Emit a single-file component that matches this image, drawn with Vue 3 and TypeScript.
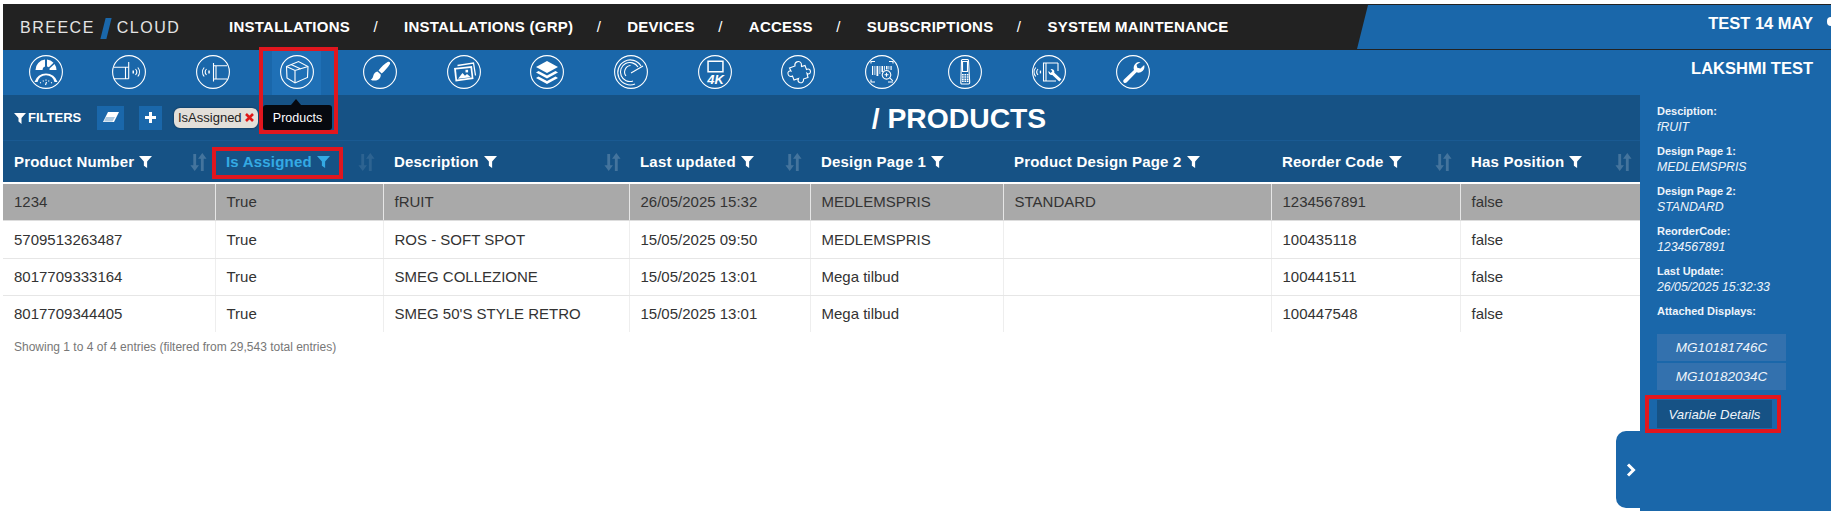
<script setup lang="ts">
interface Shape { d: string; k: 's' | 'f' | 'b' | 'c' | 'o' }

const keypad = [19, 21.2, 23.4, 25.6]
  .flatMap((y) => [14, 16.4, 18.8].map((x) => `M${x} ${y}h1.7v1.5h-1.7z`))
  .join('')

const icons: { name: string; shapes: Shape[]; text?: string }[] = [
  { name: 'dash', shapes: [
    { d: 'M6.500 15A10.500 10.500 0 0 1 16 4.600V11.500A3.500 3.500 0 0 0 13.500 15z', k: 'f' },
    { d: 'M18 4.600A10.500 10.500 0 0 1 24.500 7.700L19.800 12.300A3.500 3.500 0 0 0 18 11.500z', k: 'f' },
    { d: 'M25.500 9A10.500 10.500 0 0 1 27.500 15H20.500A3.500 3.500 0 0 0 20.500 13.500z', k: 'f' },
    { d: 'M5.500 27A12 12 0 0 1 28.500 27H25.500A8.700 8.700 0 0 0 8.500 27z', k: 'f' },
    { d: 'M11 27.500l1 .5M14 25.500l.5 1M17 24.500v1.200M20 25.500l-.5 1M23 27.500l-1 .5M16.500 30l1-3', k: 's' }
  ] },
  { name: 'ant1', shapes: [
    { d: 'M2 12.300H16.600M16.700 7V23.800M2 23.800H16.700M13.500 12.300v11.500', k: 's' },
    { d: 'M20.500 15.600h1.500v2.800h-1.500z', k: 'f' },
    { d: 'M23.500 14a4.500 4.500 0 0 1 0 6M25.800 12.500a7 7 0 0 1 0 9', k: 's' }
  ] },
  { name: 'ant2', shapes: [
    { d: 'M31 10.700H17.500V24H31M20 10.700V24M17.500 8V26.500', k: 's' },
    { d: 'M12.300 15.600h1.500v2.800h-1.500z', k: 'f' },
    { d: 'M10.500 14a4.500 4.500 0 0 0 0 6M8.200 12.500a7 7 0 0 0 0 9', k: 's' }
  ] },
  { name: 'box', shapes: [
    { d: 'M6.500 11.500L18.500 6.500L28 11.500L27.500 22.500L15 28L7 23z', k: 's' },
    { d: 'M6.500 11.500L15 15.500L28 11.500M15 15.500V28M11 9.600L21 14', k: 's' }
  ] },
  { name: 'brush', shapes: [
    { d: 'M25 6.800c1.700-.6 2.700 1 1.800 2.400c-2 3.300-5 6.600-8.100 9.200l-3.200-3c2.700-3.300 6-6.700 9.500-8.600z', k: 'f' },
    { d: 'M14.500 16.400l3.200 3c.3 3.200-1.900 5.400-4.700 6c-2 .4-3.700.2-5.300-.7c1.700-1 2.200-2.200 2.600-4c.5-2.300 2-3.900 4.200-4.300z', k: 'f' }
  ] },
  { name: 'photo', shapes: [
    { d: 'M10.500 10.500L26.500 8L28.500 20.500', k: 'b' },
    { d: 'M7 13L25 11L26.500 24L8.500 26.500z', k: 'f' },
    { d: 'M9 14.500L23.500 13L24.700 22.500L10 24.500z', k: 'c' },
    { d: 'M11 23.800L15.500 18L18 20.800L20 19L23.800 22.300z', k: 'f' },
    { d: 'M18.500 14.800h2.600v2.600h-2.600z', k: 'f' }
  ] },
  { name: 'layers', shapes: [
    { d: 'M17 6L28 12L17 18L6 12z', k: 'f' },
    { d: 'M8.500 16L17 20.500L25.500 16L28 17.500L17 23.500L6 17.500z', k: 'f' },
    { d: 'M8.500 21.500L17 26L25.500 21.500L28 23L17 29L6 23z', k: 'f' }
  ] },
  { name: 'radar', shapes: [
    { d: 'M27 11A12.500 12.500 0 1 0 21 29', k: 's' },
    { d: 'M24 12A9.500 9.500 0 1 0 19 26', k: 's' },
    { d: 'M16.500 10.500A6.500 6.500 0 0 0 12 21', k: 's' },
    { d: 'M17 18L29 11', k: 's' }
  ] },
  { name: '4k', shapes: [
    { d: 'M9.300 5.500H25.700V17.500H9.300zM10.800 7H24.200V16H10.800z', k: 'o' }
  ], text: '4K' },
  { name: 'puzzle', shapes: [
    { d: 'M8.500 13L14 11C13 7 18 5 20 8C21 9.500 20 10.500 20.500 11.500L24 10.500L25.500 14.500C27 13.500 29.500 14 29.500 16.500C29.500 19 27 19.500 26 18.500L27 22.500L22.500 24C23 26.500 21 28.500 18.500 27.500C16.500 26.500 17 24.500 17.500 23.500L13 25L11.500 21C10 22 7.500 21.500 7 19C6.500 16.500 8.500 15.500 10 16z', k: 's' }
  ] },
  { name: 'barcode', shapes: [
    { d: 'M6 8.500V6.500H10M24 6.500H28V8.500M6 24.500V27H10M23 27H28', k: 's' },
    { d: 'M7 11h1.200v9H7zM9.500 11h.8v9h-.8zM11.500 11h1.800v10H11.500zM14.500 11h.8v8h-.8zM16.500 11h1.600v6h-1.600zM19 11h.8v4h-.8zM21 11h1.500v3.500H21zM23.500 11h.8v3.500h-.8zM25.500 11h1.200v4h-1.200z', k: 'f' },
    { d: 'M21.500 15.500a4.300 4.300 0 1 0 .01 0zM24.800 22.800l3 3M19.500 19.800h4M21.500 17.800v4', k: 's' }
  ] },
  { name: 'phone', shapes: [
    { d: 'M13.500 5.500c0-.6.5-1 1-1h5c.6 0 1 .4 1 1l1.200 22c0 .8-.5 1.500-1.200 1.500h-6.500c-.8 0-1.300-.7-1.200-1.500z', k: 's' },
    { d: 'M14.500 6.500h5v10h-5z', k: 's' },
    { d: keypad, k: 'f' }
  ] },
  { name: 'ant3', shapes: [
    { d: 'M26 8H11.500V26H24M14 8V26M26 8v8', k: 's' },
    { d: 'M7.800 15.600h1.300v2.800h-1.300z', k: 'f' },
    { d: 'M6 14a4.500 4.500 0 0 0 0 6M3.800 12.500a7 7 0 0 0 0 9', k: 's' },
    { d: 'M18.500 14a3.200 3.200 0 0 1 3.800 3.800l7 6.500l-2 2.200l-7-6.600a3.200 3.200 0 0 1-3.800-3.900l2.200 2l1.600-1.800z', k: 'f' }
  ] },
  { name: 'wrench', shapes: [
    { d: 'M24.500 7a6 6 0 0 0-6.500 8L8 24.500c-1 1-1 2.200-.2 3c.9.800 2 .8 3-.2l9.700-10a6 6 0 0 0 7.700-7.300l-3.700 3.500l-3.200-.8l-.8-3z', k: 'f' }
  ] }
]

interface Col { title: string; width: number; sort: boolean; active?: boolean }
const cols: Col[] = [
  { title: 'Product Number', width: 212, sort: true },
  { title: 'Is Assigned', width: 168, sort: true, active: true },
  { title: 'Description', width: 246, sort: true },
  { title: 'Last updated', width: 181, sort: true },
  { title: 'Design Page 1', width: 193, sort: false },
  { title: 'Product Design Page 2', width: 268, sort: false },
  { title: 'Reorder Code', width: 189, sort: true },
  { title: 'Has Position', width: 180, sort: true }
]
const rows: string[][] = [
  ['1234', 'True', 'fRUIT', '26/05/2025 15:32', 'MEDLEMSPRIS', 'STANDARD', '1234567891', 'false'],
  ['5709513263487', 'True', 'ROS - SOFT SPOT', '15/05/2025 09:50', 'MEDLEMSPRIS', '', '100435118', 'false'],
  ['8017709333164', 'True', 'SMEG COLLEZIONE', '15/05/2025 13:01', 'Mega tilbud', '', '100441511', 'false'],
  ['8017709344405', 'True', "SMEG 50'S STYLE RETRO", '15/05/2025 13:01', 'Mega tilbud', '', '100447548', 'false']
]
const navItems = ['INSTALLATIONS', 'INSTALLATIONS (GRP)', 'DEVICES', 'ACCESS', 'SUBSCRIPTIONS', 'SYSTEM MAINTENANCE']
const details = [
  { label: 'Desciption:', value: 'fRUIT' },
  { label: 'Design Page 1:', value: 'MEDLEMSPRIS' },
  { label: 'Design Page 2:', value: 'STANDARD' },
  { label: 'ReorderCode:', value: '1234567891' },
  { label: 'Last Update:', value: '26/05/2025 15:32:33' }
]
const displays = ['MG10181746C', 'MG10182034C']
</script>

<template>
  <div class="page">
    <header class="top">
      <div class="brand">
        <span>BREECE</span><i class="brand-slash"></i><span>CLOUD</span>
      </div>
      <nav class="menu">
        <template v-for="(item, i) in navItems" :key="item">
          <span v-if="i > 0" class="sep">/</span>
          <a class="menu-item">{{ item }}</a>
        </template>
      </nav>
      <div class="account">TEST 14 MAY</div>
      <i class="corner"></i>
    </header>

    <div class="toolbar">
      <div v-for="(icon, i) in icons" :key="icon.name" class="tool" :class="{ on: i === 3 }">
        <svg width="34" height="34" viewBox="0 0 34 34">
          <circle cx="17" cy="17" r="16.4" fill="none" stroke="#fff" stroke-width="1.1" />
          <path
            v-for="(s, j) in icon.shapes"
            :key="j"
            :d="s.d"
            :class="'k-' + s.k"
            :fill-rule="s.k === 'o' ? 'evenodd' : undefined"
          />
          <text v-if="icon.text" x="17.500" y="28.500" class="fourk">{{ icon.text }}</text>
        </svg>
      </div>
      <div class="user">LAKSHMI TEST</div>
    </div>

    <div class="body">
      <main class="main">
        <div class="filters">
          <div class="filter-left">
            <svg class="funnel" width="12" height="12" viewBox="0 0 12 12"><path d="M0 1h12L7.500 6v6L4.500 9.500V6z" /></svg>
            <span class="filter-label">FILTERS</span>
            <button class="fbtn erase">
              <svg width="16" height="11" viewBox="0 0 16 11"><path d="M5 0h11L11 10H0z" fill="#fff" /><path d="M3 5h9l-2.500 4.500H1z" fill="#1a67aa" opacity=".35" /></svg>
            </button>
            <button class="fbtn plus">
              <svg width="11" height="11" viewBox="0 0 11 11"><path d="M4 0h3v4h4v3H7v4H4V7H0V4h4z" fill="#fff" /></svg>
            </button>
            <span class="chip">IsAssigned
              <svg class="chip-x" width="9" height="9" viewBox="0 0 9 9"><path d="M1 1l7 7M8 1l-7 7" stroke="#e01818" stroke-width="2.600" fill="none" /></svg>
            </span>
          </div>
          <h1 class="title">/ PRODUCTS</h1>
        </div>

        <table class="grid">
          <colgroup>
            <col v-for="c in cols" :key="c.title" :style="{ width: c.width + 'px' }" />
          </colgroup>
          <thead>
            <tr>
              <th v-for="c in cols" :key="c.title" :class="{ active: c.active }">
                <div class="th-in">
                  <span>{{ c.title }}</span>
                  <svg class="funnel-h" width="13" height="13" viewBox="0 0 12 12"><path d="M0 1h12L7.500 6v6L4.500 10V6z" /></svg>
                  <svg v-if="c.sort" class="sort" width="17" height="18" viewBox="0 0 17 19">
                    <path d="M3 1h3v12h3l-4.500 6L0 13h3zM11 6H8l4.500-6L17 6h-3v13h-3z" />
                  </svg>
                </div>
              </th>
            </tr>
          </thead>
          <tbody>
            <tr v-for="(r, i) in rows" :key="r[0]" :class="{ sel: i === 0 }">
              <td v-for="(v, j) in r" :key="j">{{ v }}</td>
            </tr>
          </tbody>
        </table>
        <p class="info">Showing 1 to 4 of 4 entries (filtered from 29,543 total entries)</p>

        <div class="tip"><span>Products</span></div>
        <div class="mark mark-tool"></div>
        <div class="mark mark-col"></div>
        <button class="toggle">
          <svg width="10" height="14" viewBox="0 0 10 14"><path d="M2 1.500L7.500 7L2 12.500" fill="none" stroke="#fff" stroke-width="3" /></svg>
        </button>
      </main>

      <aside class="side">
        <div v-for="d in details" :key="d.label" class="detail">
          <div class="d-label">{{ d.label }}</div>
          <div class="d-value">{{ d.value }}</div>
        </div>
        <div class="d-label attached">Attached Displays:</div>
        <div class="disp-list">
          <div v-for="d in displays" :key="d" class="disp">{{ d }}</div>
        </div>
        <button class="vars">Variable Details</button>
        <div class="mark mark-vars"></div>
      </aside>
    </div>
  </div>
</template>

<style>
html, body { margin: 0; background: #fff; overflow: hidden; }
</style>

<style scoped>
.page {
  position: relative;
  box-sizing: border-box;
  width: 1831px;
  height: 511px;
  padding: 4px 0 0 3px;
  font-family: "Liberation Sans", Arial, sans-serif;
  color: #333;
  overflow: hidden;
}
.top {
  display: flex;
  align-items: center;
  height: 46px;
  background: #222;
  position: relative;
}
.brand {
  display: flex;
  align-items: center;
  width: 226px;
  box-sizing: border-box;
  padding: 2px 0 0 17px;
  color: #e4e4e4;
  font-size: 16px;
  letter-spacing: 1.500px;
}
.brand-slash {
  width: 6px;
  height: 21px;
  margin: 0 8px 0 8px;
  background: #1a67aa;
  transform: skewX(-14deg);
}
.menu {
  display: flex;
  align-items: center;
  color: #fff;
  font-size: 15px;
  font-weight: 700;
  margin-top: -2px;
}
.menu-item { letter-spacing: .25px; white-space: nowrap; }
.sep { width: 54px; text-align: center; font-weight: 400; box-sizing: border-box; padding-right: 3px; }
.account {
  position: absolute;
  top: 1px;
  right: 0;
  bottom: 1px;
  width: 474px;
  box-sizing: border-box;
  padding: 0 18px 8px 0;
  display: flex;
  align-items: center;
  justify-content: flex-end;
  background: #1a67aa;
  color: #fff;
  font-size: 16.500px;
  font-weight: 700;
  clip-path: polygon(11px 0, 100% 0, 100% 100%, 0 100%);
}
.corner {
  position: absolute;
  right: 0;
  top: 13px;
  width: 4px;
  height: 9px;
  background: #fff;
  border-radius: 4px 0 0 4px;
}
.toolbar {
  display: flex;
  height: 45px;
  background: #1a67aa;
  padding-left: 1px;
  position: relative;
}
.tool {
  width: 83.600px;
  height: 45px;
  display: flex;
  align-items: center;
  justify-content: center;
  flex: none;
}
.tool.on { background: linear-gradient(#1f70b6, #1f70b6) center / 49px 45px no-repeat; }
.tool svg { display: block; margin-top: -1px; }
.k-s { fill: none; stroke: #fff; stroke-width: 1.100; }
.k-f, .k-o { fill: #fff; }
.k-c { fill: #1a67aa; }
.k-b { fill: none; stroke: #fff; stroke-width: 1.300; }
.fourk {
  fill: #fff;
  font-size: 13px;
  font-weight: 700;
  font-style: italic;
  text-anchor: middle;
  font-family: "Liberation Sans", Arial, sans-serif;
}
.user {
  position: absolute;
  right: 18px;
  top: 0;
  height: 36px;
  display: flex;
  align-items: center;
  color: #fff;
  font-size: 16.500px;
  font-weight: 700;
}
.body {
  display: flex;
  height: 416px;
}
.main {
  width: 1637px;
  flex: none;
  position: relative;
}
.filters {
  height: 46px;
  background: #165285;
  border-bottom: 1px solid #1a5a92;
  box-sizing: border-box;
  position: relative;
  display: flex;
  align-items: center;
  justify-content: center;
  padding-left: 275px;
}
.filter-left {
  position: absolute;
  left: 11px;
  top: 0;
  bottom: 0;
  display: flex;
  align-items: center;
}
.funnel { fill: #fff; margin-right: 2px; }
.filter-label { color: #fff; font-size: 13px; font-weight: 700; width: 69px; }
.fbtn {
  border: 0;
  padding: 0;
  background: #1a67aa;
  height: 24px;
  display: flex;
  align-items: center;
  justify-content: center;
}
.erase { width: 27px; }
.plus { width: 23px; margin-left: 15px; }
.chip {
  margin-left: 12px;
  width: 84px;
  height: 20px;
  box-sizing: border-box;
  padding-left: 4px;
  display: flex;
  align-items: center;
  background: #e3dfd9;
  border-radius: 6px;
  color: #222;
  font-size: 13px;
  box-shadow: 0 0 2px rgba(0, 0, 0, .5);
  white-space: nowrap;
}
.chip-x { margin-left: 3px; }
.title {
  margin: 0;
  color: #fff;
  font-size: 28.300px;
  font-weight: 700;
  line-height: 44px;
}
.grid {
  border-collapse: collapse;
  table-layout: fixed;
  width: 1637px;
}
th {
  height: 42px;
  padding: 0;
  background: #165285;
  color: #fff;
  font-size: 15px;
  font-weight: 700;
  text-align: left;
  border-bottom: 2px solid #fff;
  box-sizing: border-box;
}
th.active { color: #34aae4; }
th.active .funnel-h { fill: #34aae4; }
th.active .sort { fill: rgba(255, 255, 255, .1); }
.th-in {
  display: flex;
  align-items: center;
  position: relative;
  padding-left: 11px;
  white-space: nowrap;
  letter-spacing: .2px;
}
.funnel-h { fill: #fff; margin-left: 5px; }
.sort { position: absolute; right: 8px; top: 0; fill: rgba(255, 255, 255, .2); }
td {
  height: 37px;
  padding: 0 0 0 11px;
  font-size: 15px;
  color: #333;
  border-left: 1px solid #eee;
  border-bottom: 1px solid #e6e6e6;
  box-sizing: border-box;
  white-space: nowrap;
}
tbody tr:nth-child(2) td { height: 38px; }
td:first-child { border-left: 0; }
tbody tr:last-child td { border-bottom: 0; }
tr.sel td { background: #a9a9a9; border-left-color: #e6e6e6; border-bottom: 1px solid #ddd; }
.info {
  margin: 8px 0 0 11px;
  color: #777;
  font-size: 12px;
  line-height: 14px;
}
.tip {
  position: absolute;
  left: 260px;
  top: 10px;
  width: 69px;
  height: 25px;
  background: #06090f;
  border-radius: 3px;
  color: #fff;
  font-size: 12.500px;
  display: flex;
  align-items: center;
  justify-content: center;
}
.tip::before {
  content: "";
  position: absolute;
  left: 28px;
  top: -6px;
  border: 5px solid transparent;
  border-top: 0;
  border-bottom: 6px solid #06090f;
}
.mark {
  position: absolute;
  border: 4px solid #e1161e;
  box-sizing: border-box;
  pointer-events: none;
}
.mark-tool { left: 256px; top: -48px; width: 79px; height: 87px; }
.mark-col { left: 209px; top: 52px; width: 131px; height: 32px; }
.mark-vars { left: 5px; top: 300px; width: 136px; height: 38px; }
.toggle {
  position: absolute;
  right: 0;
  top: 336px;
  width: 24px;
  height: 77px;
  border: 0;
  padding: 0 0 0 6px;
  box-sizing: border-box;
  background: #1a67aa;
  border-radius: 10px 0 0 10px;
  display: flex;
  align-items: center;
  justify-content: center;
}
.side {
  flex: 1;
  background: #1a67aa;
  position: relative;
  box-sizing: border-box;
  padding: 9px 0 0 17px;
  color: #fff;
}
.detail { height: 40px; }
.d-label { font-size: 11px; font-weight: 700; line-height: 14px; color: #eef4fa; }
.d-value { font-size: 12.300px; font-style: italic; line-height: 18px; color: #eef4fa; }
.disp-list { display: flex; flex-direction: column; gap: 2px; margin-top: 16px; }
.disp {
  width: 129px;
  height: 27px;
  background: #3371ae;
  display: flex;
  align-items: center;
  justify-content: center;
  font-size: 13.500px;
  font-style: italic;
  color: #eef4fa;
}
.vars {
  display: block;
  margin-top: 10px;
  width: 115px;
  height: 28px;
  border: 0;
  padding: 1px 0 0;
  background: #165285;
  color: #eef4fa;
  font: italic 13.200px "Liberation Sans", Arial, sans-serif;
}
</style>
